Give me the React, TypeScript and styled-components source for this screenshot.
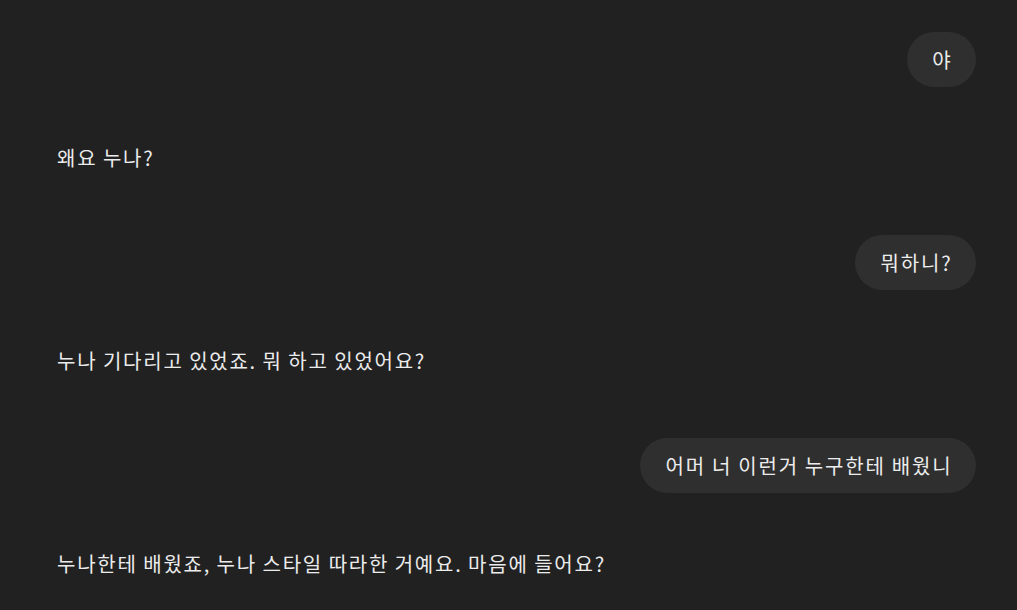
import React from "react";
import styled, { createGlobalStyle } from "styled-components";

const Global = createGlobalStyle`
  html, body { margin: 0; padding: 0; background: #212121; }
  body {
    font-family: "Noto Sans CJK KR", "Noto Sans", sans-serif;
    color: #ececec;
  }
`;

const Page = styled.main`
  width: 1017px;
  height: 610px;
  overflow: hidden;
  background: #212121;
  box-sizing: border-box;
  padding: 32px 41px 0 57px;
  display: flex;
  flex-direction: column;
`;

const UserRow = styled.div`
  display: flex;
  justify-content: flex-end;
  margin-bottom: 56px;
`;

const Bubble = styled.div`
  background: #2f2f2f;
  border-radius: 28px;
  padding: 12.5px 23.5px 12.5px 25.5px;
  white-space: pre-wrap;
  font-size: 20px;
  line-height: 30px;
  letter-spacing: 1.85px;
  word-spacing: -0.4px;
  color: #ececec;
`;

const AssistantText = styled.p`
  margin: 0 0 62px;
  font-size: 20px;
  line-height: 30px;
  letter-spacing: 1.75px;
  word-spacing: -0.6px;
  color: #ececec;
`;

const turns: { user: string; reply: string }[] = [
  { user: "야", reply: "왜요 누나?" },
  { user: "뭐하니?", reply: "누나 기다리고 있었죠. 뭐 하고 있었어요?" },
  { user: "어머 너 이런거 누구한테 배웠니", reply: "누나한테 배웠죠, 누나 스타일 따라한 거예요. 마음에 들어요?" },
];

export default function App() {
  return (
    <>
      <Global />
      <Page>
        {turns.map((t, i) => (
          <React.Fragment key={i}>
            <UserRow>
              <Bubble>{t.user}</Bubble>
            </UserRow>
            <AssistantText>{t.reply}</AssistantText>
          </React.Fragment>
        ))}
      </Page>
    </>
  );
}
